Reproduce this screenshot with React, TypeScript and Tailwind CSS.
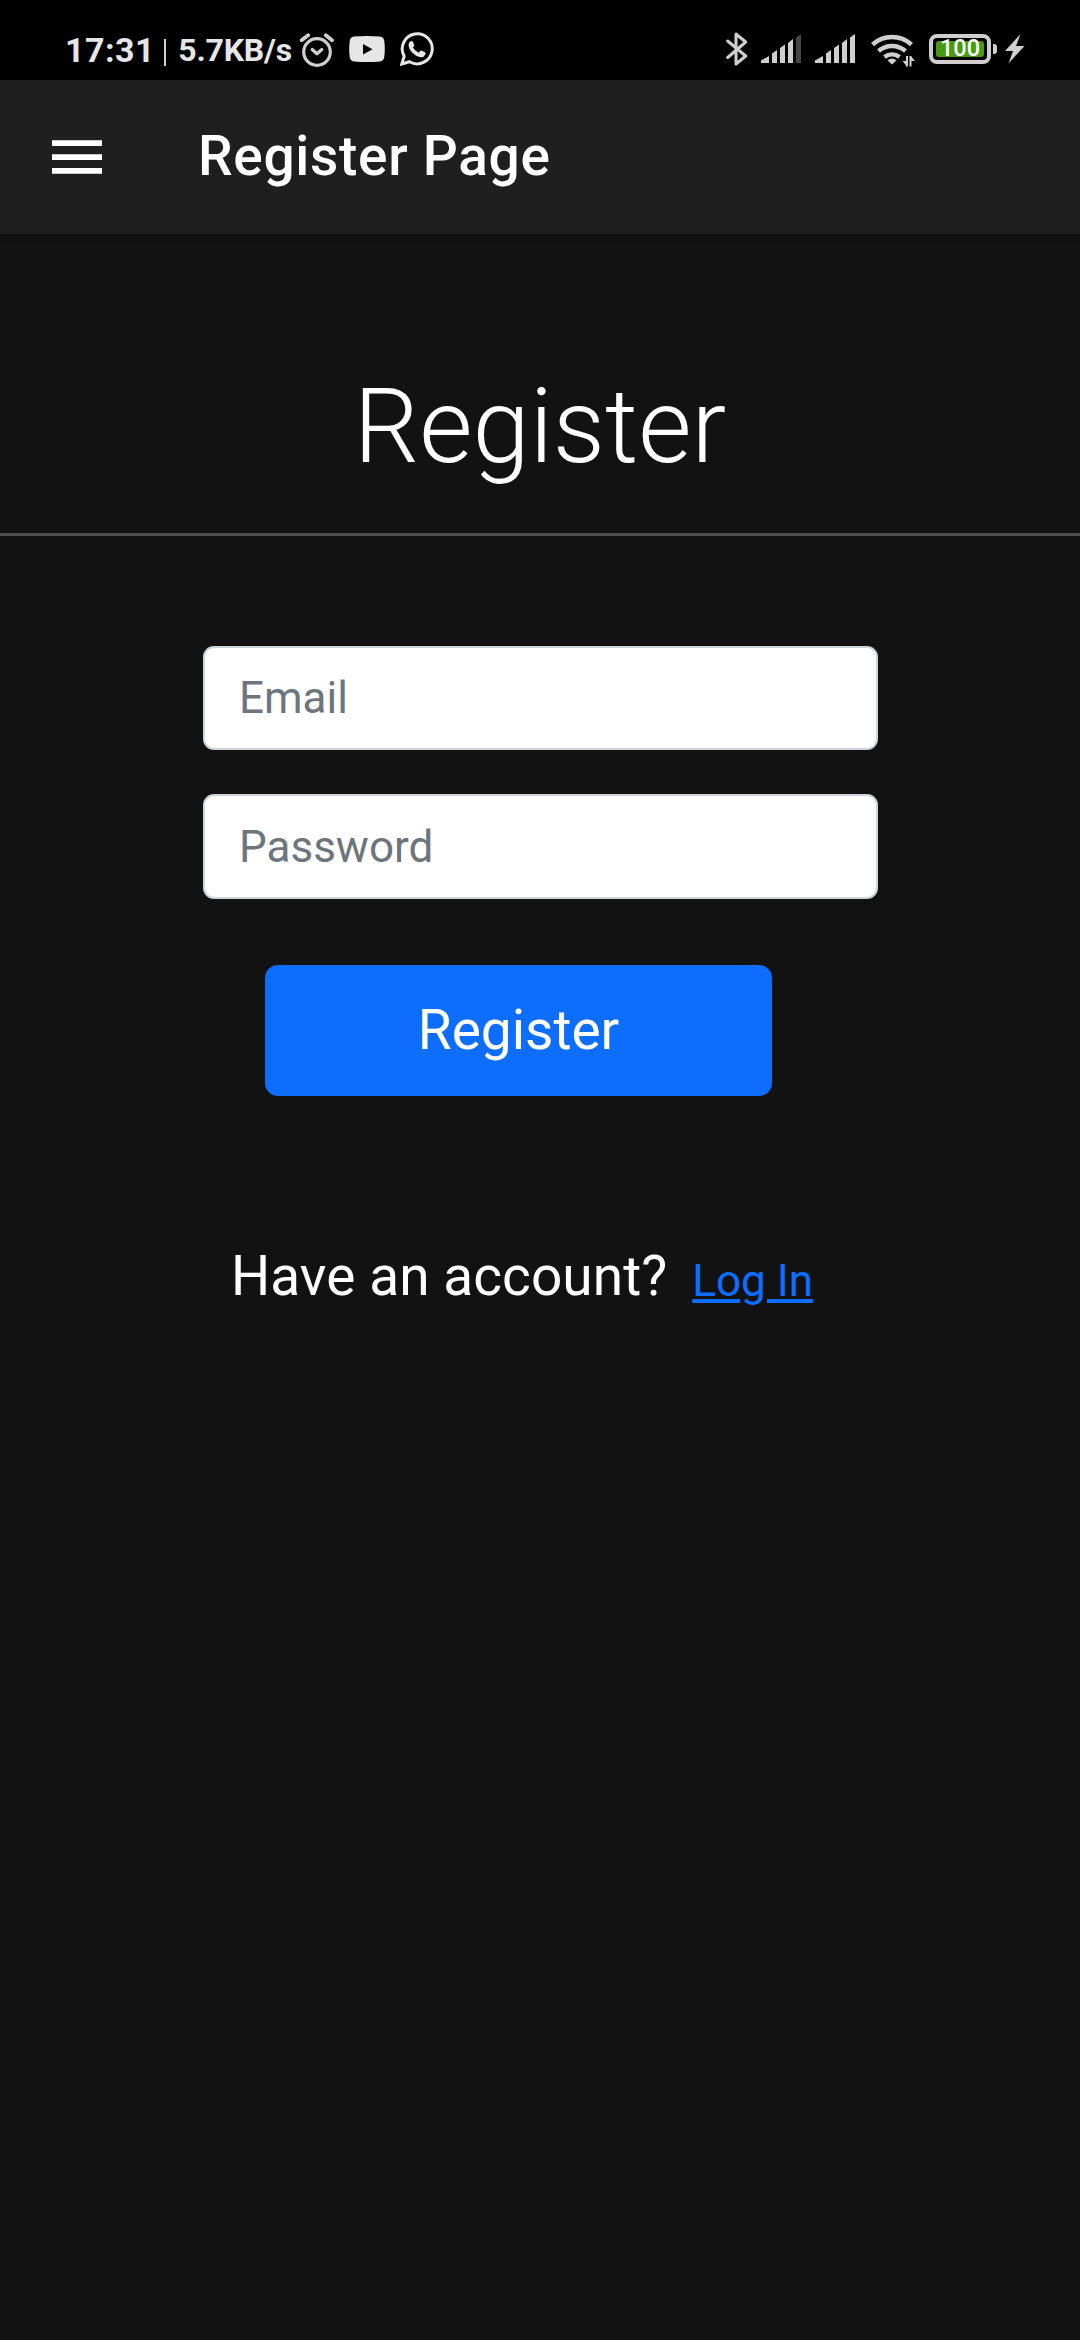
import type { ReactNode } from 'react';

function Signal({ dimLast = false }: { dimLast?: boolean }) {
  return (
    <svg width="40" height="30" viewBox="0 0 40 30" fill="#cfcfcf" className="block shrink-0">
      <path d="M0 29V26.5L8 22V29Z" />
      <path d="M11 29V19.5L16 16V29Z" />
      <path d="M19 29V14L24 10.5V29Z" />
      <path d="M27 29V9L32 5V29Z" />
      <path d="M35 29V3.5L40 0V29Z" fill={dimLast ? '#454545' : '#cfcfcf'} />
    </svg>
  );
}

function StatusBar() {
  return (
    <div className="flex h-[80px] shrink-0 items-start bg-black text-[#e6e6e6]">
      <div className="flex h-full w-[292px] shrink-0 items-start whitespace-nowrap pl-[65px] font-bold leading-none">
        <span className="mt-[33px] w-[90px] text-[34px] tracking-[0.45px]">17:31</span>
        <span className="mt-[39px] ml-[9px] h-[27px] w-[3px] bg-[#cfcfcf]" />
        <span className="mt-[34px] ml-[12px] text-[32px] tracking-[-0.2px]">5.7KB/s</span>
      </div>
      <svg width="36" height="36" viewBox="0 0 36 36" className="mt-[32px] ml-[7px] shrink-0" fill="none" stroke="#cfcfcf" strokeLinecap="round">
        <circle cx="18" cy="20" r="13.3" strokeWidth="3.2" />
        <path d="M13.2 17.5L18 21.8L22.8 17.5" strokeWidth="3.2" strokeLinejoin="round" />
        <path d="M2.6 8.2L9.2 3.2M26.8 3.2L33 8.2" strokeWidth="3.8" />
      </svg>
      <svg width="36" height="26" viewBox="0 0 36 26" className="mt-[36px] ml-[14px] shrink-0">
        <path fillRule="evenodd" fill="#e6e6e6" d="M5 .5Q18-.5 31 .5Q34.5 1 35.2 4.5Q36.4 13 35.2 21.5Q34.5 25 31 25.5Q18 26.5 5 25.5Q1.5 25 .8 21.5Q-.4 13 .8 4.5Q1.5 1 5 .5ZM14 8V18.5L23.5 13.25Z" />
      </svg>
      <svg width="34" height="34" viewBox="0 0 34 34" className="mt-[32px] ml-[15px] shrink-0">
        <path d="M1.8 32L4.2 24.2A15 15 0 1 1 9.6 29.7Z" fill="none" stroke="#e6e6e6" strokeWidth="3" strokeLinejoin="miter" />
        <path d="M10 9.5Q12 8.3 13 10L14.3 13Q14.5 14 12.9 15.6Q15 19 18.6 20.7L20.3 18.8Q21 18.3 22 18.8L25 20.3Q26 21 25.4 22.5Q24 25.500 20.5 25.3Q16 24.5 12 20.5Q8.8 17 8.5 13.5Q8.5 11 10 9.5Z" fill="#e6e6e6" />
      </svg>

      <svg width="22" height="34" viewBox="0 0 22 34" className="mt-[32px] ml-[292px] shrink-0" fill="none" stroke="#cfcfcf" strokeWidth="3" strokeLinejoin="round" strokeLinecap="round">
        <path d="M1.7 9L19.7 24L10 32V2L19.7 10L1.7 25.5" />
      </svg>
      <div className="mt-[34px] ml-[13px]"><Signal dimLast /></div>
      <div className="mt-[34px] ml-[14px]"><Signal /></div>
      <svg width="44" height="34" viewBox="0 0 44 34" className="mt-[33px] ml-[16px] shrink-0" fill="none" stroke="#cfcfcf" strokeWidth="4.4">
        <path d="M1.5 11.5A29 29 0 0 1 40.5 11.5" />
        <path d="M7.5 18A20.5 20.5 0 0 1 34.5 18" />
        <path d="M13.5 24A12 12 0 0 1 28.5 24" />
        <path d="M16.5 27.5Q21 23.5 25.5 27.5L21 31.5Z" fill="#cfcfcf" stroke="none" />
        <path d="M36 23V33.5M39.5 23V33.5" strokeWidth="2" />
        <path d="M31.500 28L35.8 33.5V28ZM44 28L39.7 23V28Z" fill="#cfcfcf" stroke="none" />
      </svg>
      <div className="mt-[34px] ml-[14px] flex h-[30px] w-[62px] shrink-0 rounded-[8px] border-[4px] border-[#cfcfcf] p-[3px]">
        <div className="flex h-[16px] w-[48px] items-center justify-center rounded-[3px] bg-[#459c12] text-[23.5px] font-medium leading-none text-white">
          100
        </div>
      </div>
      <div className="mt-[44px] ml-[2px] h-[10px] w-[4px] shrink-0 rounded-r-[3px] bg-[#cfcfcf]" />
      <svg width="20" height="30" viewBox="0 0 20 30" className="mt-[34px] ml-[8px] shrink-0" fill="#cfcfcf">
        <path d="M15.5 0L0 17H8L3.5 29.5L19.5 12H11Z" />
      </svg>
    </div>
  );
}

function Field({ children }: { children: ReactNode }) {
  return (
    <div className="flex w-[675px] items-center rounded-[11px] border-2 border-[#ced4da] bg-white pl-[34px] text-[44px] leading-none text-[#6c757d]">
      {children}
    </div>
  );
}

export default function App() {
  return (
    <div className="flex h-[2340px] w-[1080px] flex-col overflow-hidden bg-[#121212] font-[Roboto,sans-serif] text-white">
      <StatusBar />
      <header className="flex h-[154px] shrink-0 items-center bg-[#1f1f1f] shadow-[0_2px_8px_rgba(0,0,0,0.2)]">
        <svg width="50" height="34" viewBox="0 0 50 34" className="ml-[52px]" fill="white">
          <path d="M0 .3H50V6H0ZM0 14.2H50V20H0ZM0 28H50V33.7H0Z" />
        </svg>
        <h1 className="mb-[2px] ml-[96px] text-[55px] font-medium leading-none tracking-[0.7px]">Register Page</h1>
      </header>
      <main className="flex flex-col">
        <h2 className="mt-[133px] text-center text-[103px] font-light leading-[120px]">Register</h2>
        <div className="mt-[46px] h-[3px] bg-[#4d4d4d]" />
        <div className="ml-[203px] mt-[110px] grid grid-rows-[104px_105px] gap-[44px]">
          <Field>Email</Field>
          <Field>Password</Field>
        </div>
        <button className="ml-[265px] mt-[66px] h-[131px] w-[507px] rounded-[13px] bg-[#0d6efd] text-[55px] leading-none">
          Register
        </button>
        <div className="ml-[231px] mt-[145px] flex items-baseline whitespace-nowrap">
          <span className="text-[55px] leading-[70px] tracking-[0.06px]">Have an account?</span>
          <a className="relative top-px ml-[25px] text-[44px] leading-none text-[#0d6efd] underline">Log In</a>
        </div>
      </main>
    </div>
  );
}
